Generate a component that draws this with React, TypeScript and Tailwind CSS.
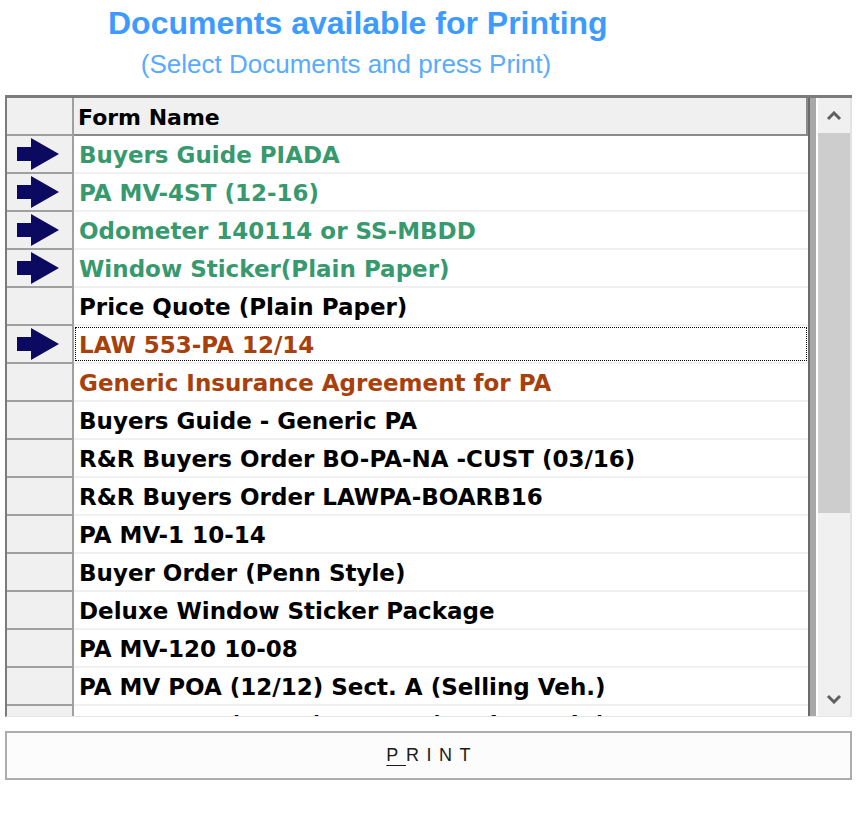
import React from 'react';

type Row = { name: string; color: 'green' | 'brown' | 'black'; arrow?: boolean; selected?: boolean };

const rows: Row[] = [
  { name: 'Buyers Guide PIADA', color: 'green', arrow: true },
  { name: 'PA MV-4ST (12-16)', color: 'green', arrow: true },
  { name: 'Odometer 140114 or SS-MBDD', color: 'green', arrow: true },
  { name: 'Window Sticker(Plain Paper)', color: 'green', arrow: true },
  { name: 'Price Quote (Plain Paper)', color: 'black' },
  { name: 'LAW 553-PA 12/14', color: 'brown', arrow: true, selected: true },
  { name: 'Generic Insurance Agreement for PA', color: 'brown' },
  { name: 'Buyers Guide - Generic PA', color: 'black' },
  { name: 'R&R Buyers Order BO-PA-NA -CUST (03/16)', color: 'black' },
  { name: 'R&R Buyers Order LAWPA-BOARB16', color: 'black' },
  { name: 'PA MV-1 10-14', color: 'black' },
  { name: 'Buyer Order (Penn Style)', color: 'black' },
  { name: 'Deluxe Window Sticker Package', color: 'black' },
  { name: 'PA MV-120 10-08', color: 'black' },
  { name: 'PA MV POA (12/12) Sect. A (Selling Veh.)', color: 'black' },
  { name: 'PA MV POA (12/12) Sect. B (Buying Veh.)', color: 'black' },
];

const colorClass = {
  green: 'text-[#37996e]',
  brown: 'text-[#a8400c]',
  black: 'text-black',
};

function Arrow() {
  return (
    <svg width="42" height="32" viewBox="0 0 42 32">
      <path d="M0 9 H14 V0 L42 16 L14 32 V23 H0 Z" fill="#0b0960" />
    </svg>
  );
}

function Chevron({ down }: { down?: boolean }) {
  return (
    <svg width="16" height="10" viewBox="0 0 16 10">
      <polyline
        points={down ? '2,2 8,8 14,2' : '2,8 8,2 14,8'}
        fill="none"
        stroke="#606060"
        strokeWidth="3"
      />
    </svg>
  );
}

export default function App() {
  return (
    <div className="w-[858px] h-[815px] bg-white overflow-hidden" style={{ fontFamily: '"Liberation Sans", Arial, sans-serif' }}>
      {/* Header */}
      <div className="h-[95px] pl-[108px] pt-[3px]">
        <div className="w-[496px] text-center text-[32px] font-bold leading-[40px] text-[#3d9bff] whitespace-nowrap">
          Documents available for Printing
        </div>
        <div className="w-[476px] text-center text-[26px] leading-[34px] text-[#58abff] mt-[4px] whitespace-nowrap">
          (Select Documents and press Print)
        </div>
      </div>

      {/* Grid */}
      <div className="ml-[5px] w-[847px] h-[622px] flex border-t-[3px] border-l-2 border-t-[#7b7b7b] border-l-[#7b7b7b] border-b border-b-[#e6e6e6] overflow-hidden">
        <div className="w-[801px] overflow-hidden" style={{ fontFamily: '"DejaVu Sans", Verdana, sans-serif' }}>
          {/* Header row */}
          <div className="flex h-[38px]">
            <div className="w-[67px] shrink-0 bg-[#f0f0f0] border-r-2 border-b-2 border-[#a0a0a0]" />
            <div className="flex-1 bg-[#f0f0f0] border-r-2 border-b-2 border-[#8a8a8a] pl-[4px] pt-[2px] flex items-center text-[22px] font-bold text-black">
              Form Name
            </div>
          </div>
          {rows.map((r) => (
            <div key={r.name} className="flex h-[38px]">
              <div className="w-[67px] shrink-0 bg-[#f0f0f0] border-r-2 border-b-2 border-[#a0a0a0] flex items-center pl-[10px]">
                {r.arrow && <Arrow />}
              </div>
              <div className="flex-1 border-b-2 border-[#f0f0f0] p-px">
                <div
                  className={`h-full flex items-center pl-[3px] pt-[3px] text-[23px] font-bold whitespace-nowrap ${colorClass[r.color]} ${
                    r.selected ? 'border border-dotted border-black' : 'border border-transparent'
                  }`}
                >
                  {r.name}
                </div>
              </div>
            </div>
          ))}
        </div>
        {/* Scrollbar */}
        <div className="w-[2px] bg-[#6b6b6b]" />
        <div className="w-[6px] bg-[#a8a8a8]" />
        <div className="w-[2px] bg-white" />
        <div className="w-[32px] bg-[#f0f0f0] flex flex-col">
          <div className="h-[35px] flex items-center justify-center">
            <Chevron />
          </div>
          <div className="h-[380px] bg-[#cdcdcd]" />
          <div className="flex-1" />
          <div className="h-[35px] flex items-center justify-center">
            <Chevron down />
          </div>
        </div>
        <div className="w-[2px] bg-[#e2e2e2]" />
      </div>

      {/* Print button */}
      <div className="ml-[5px] mt-[14px] w-[847px] h-[49px] border-2 border-[#adadad] bg-[#fcfcfc] flex items-center justify-center">
        <span className="text-[18px] tracking-[0.42em] text-[#1a1a1a] pl-[0.42em]">
          <span className="underline underline-offset-4">P</span>RINT
        </span>
      </div>
    </div>
  );
}
